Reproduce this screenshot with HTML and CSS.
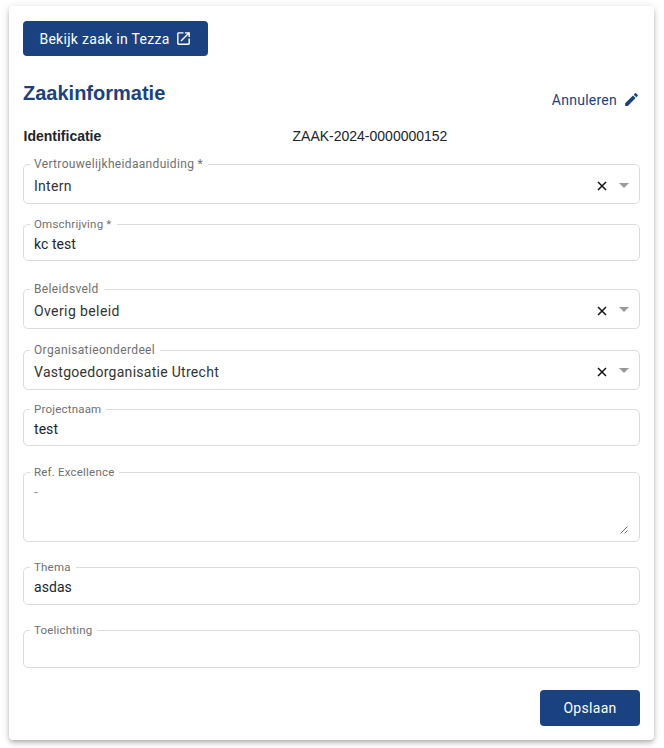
FILE: index.html
```html
<!DOCTYPE html>
<html lang="nl">
<head>
<meta charset="utf-8">
<title>Zaakinformatie</title>
<link rel="stylesheet" href="styles.css">
</head>
<body>
<main class="card">
  <a class="button button-link"><span class="open-text">Bekijk zaak in Tezza</span>
    <svg class="open-icon" viewBox="0 0 24 24"><path d="M19 19H5V5h7V3H5c-1.11 0-2 .9-2 2v14c0 1.1.89 2 2 2h14c1.1 0 2-.9 2-2v-7h-2v7zM14 3v2h3.59l-9.83 9.83 1.41 1.41L19 6.41V10h2V3h-7z"/></svg>
  </a>
  <header class="heading">
    <h1>Zaakinformatie</h1>
    <a class="cancel"><span>Annuleren</span>
      <svg viewBox="0 0 24 24"><path d="M3 17.25V21h3.75L17.81 9.94l-3.75-3.75L3 17.25zM20.71 7.04a.996.996 0 0 0 0-1.41l-2.34-2.34a.996.996 0 0 0-1.41 0l-1.83 1.83 3.75 3.75 1.83-1.83z"/></svg>
    </a>
  </header>
  <div class="identity"><strong>Identificatie</strong><span class="case-number">ZAAK-2024-0000000152</span></div>
  <form>
    <div class="field select confidentiality">
      <label>Vertrouwelijkheidaanduiding *</label><span class="value">Intern</span>
      <svg class="clear" viewBox="0 0 10 10"><path d="M1 1l8 8M9 1L1 9"/></svg><i class="arrow"></i>
    </div>
    <div class="field description"><label>Omschrijving *</label><span class="value">kc test</span></div>
    <div class="field select policy">
      <label>Beleidsveld</label><span class="value">Overig beleid</span>
      <svg class="clear" viewBox="0 0 10 10"><path d="M1 1l8 8M9 1L1 9"/></svg><i class="arrow"></i>
    </div>
    <div class="field select organisation">
      <label>Organisatieonderdeel</label><span class="value">Vastgoedorganisatie Utrecht</span>
      <svg class="clear" viewBox="0 0 10 10"><path d="M1 1l8 8M9 1L1 9"/></svg><i class="arrow"></i>
    </div>
    <div class="field project"><label>Projectnaam</label><span class="value">test</span></div>
    <div class="field area"><label>Ref. Excellence</label><span class="value">-</span>
      <svg class="grip" viewBox="0 0 8 8"><path d="M.5 7.5l7-7M4.5 7.5l3-3"/></svg>
    </div>
    <div class="field theme"><label>Thema</label><span class="value">asdas</span></div>
    <div class="field notes"><label>Toelichting</label></div>
    <div class="actions"><button type="button" class="button save">Opslaan</button></div>
  </form>
</main>
</body>
</html>
```
FILE: styles.css
```css
* { box-sizing: border-box; }
body { margin: 0; padding: 6px 10px 8px 9px; background: #fff; font-family: Roboto, sans-serif; color: #212529; }
.card { width: 645px; height: 734px; padding: 15px 14px 14px; background: #fff; border-radius: 4px; box-shadow: 0 2px 4px -1px rgba(0,0,0,.2), 0 1px 10px rgba(0,0,0,.12), 0 4px 5px rgba(0,0,0,.1); }
.button { display: flex; align-items: center; justify-content: center; border: 0; border-radius: 4px; background: #1b4280; color: #fff; font: 14px/20px Roboto, sans-serif; letter-spacing: .3px; }
.button-link { width: 185px; height: 35px; gap: 5px; }
.open-icon { width: 17px; height: 17px; fill: currentColor; }
.heading { display: flex; justify-content: space-between; height: 65px; padding: 24px 0 0; color: #1b4280; }
h1 { margin: 0; font: bold 20px/26px "Liberation Sans", sans-serif; }
.cancel { display: flex; align-items: center; gap: 6px; height: 20px; margin-top: 10px; font-size: 14px; letter-spacing: .25px; }
.cancel svg { width: 17px; height: 17px; margin-top: -2px; fill: currentColor; }
.identity { display: grid; grid-template-columns: 269px 1fr; height: 43px; padding: 5px 0 0 .5px; font: 14px/20px "Liberation Sans", sans-serif; }
.field { position: relative; display: flex; align-items: center; height: 37px; padding: 0 10px; border: 1px solid #dcdcdc; border-radius: 5px; }
.field label { position: absolute; top: -9px; left: 6px; padding: 0 5px 0 4px; background: #fff; color: #707070; font-size: 11.5px; line-height: 16px; letter-spacing: .2px; white-space: nowrap; }
.value { font-size: 14px; line-height: 20px; letter-spacing: .05px; margin-top: 2px; }
.select { height: 40px; }
.select label { font-size: 12px; letter-spacing: .36px; }
.confidentiality label { letter-spacing: .33px; }
.select .value { margin-top: 3px; color: #333; letter-spacing: .28px; }
.policy .value { letter-spacing: .4px; }
.description { margin-top: 20px; }
.policy { margin-top: 28px; }
.organisation { margin-top: 21px; }
.project { margin-top: 19px; }
.area { height: 70px; align-items: flex-start; margin-top: 26px; }
.area .value { margin-top: 9px; color: #999; }
.theme { height: 38px; margin-top: 25px; }
.notes { height: 38px; margin-top: 25px; }
.clear { width: 10px; height: 10px; margin: 3px 12px 0 auto; fill: none; stroke: #111; stroke-width: 1.5; }
.arrow { width: 10px; border: 5px solid transparent; border-top-color: #999; border-bottom: 0; margin-top: 1px; }
.confidentiality .arrow { margin-top: 3px; }
.grip { position: absolute; right: 11px; bottom: 7px; width: 8px; height: 8px; fill: none; stroke: #444; stroke-width: .8; }
.actions { display: flex; justify-content: flex-end; margin-top: 22px; }
.save { width: 100px; height: 36px; padding: 0; }
```
